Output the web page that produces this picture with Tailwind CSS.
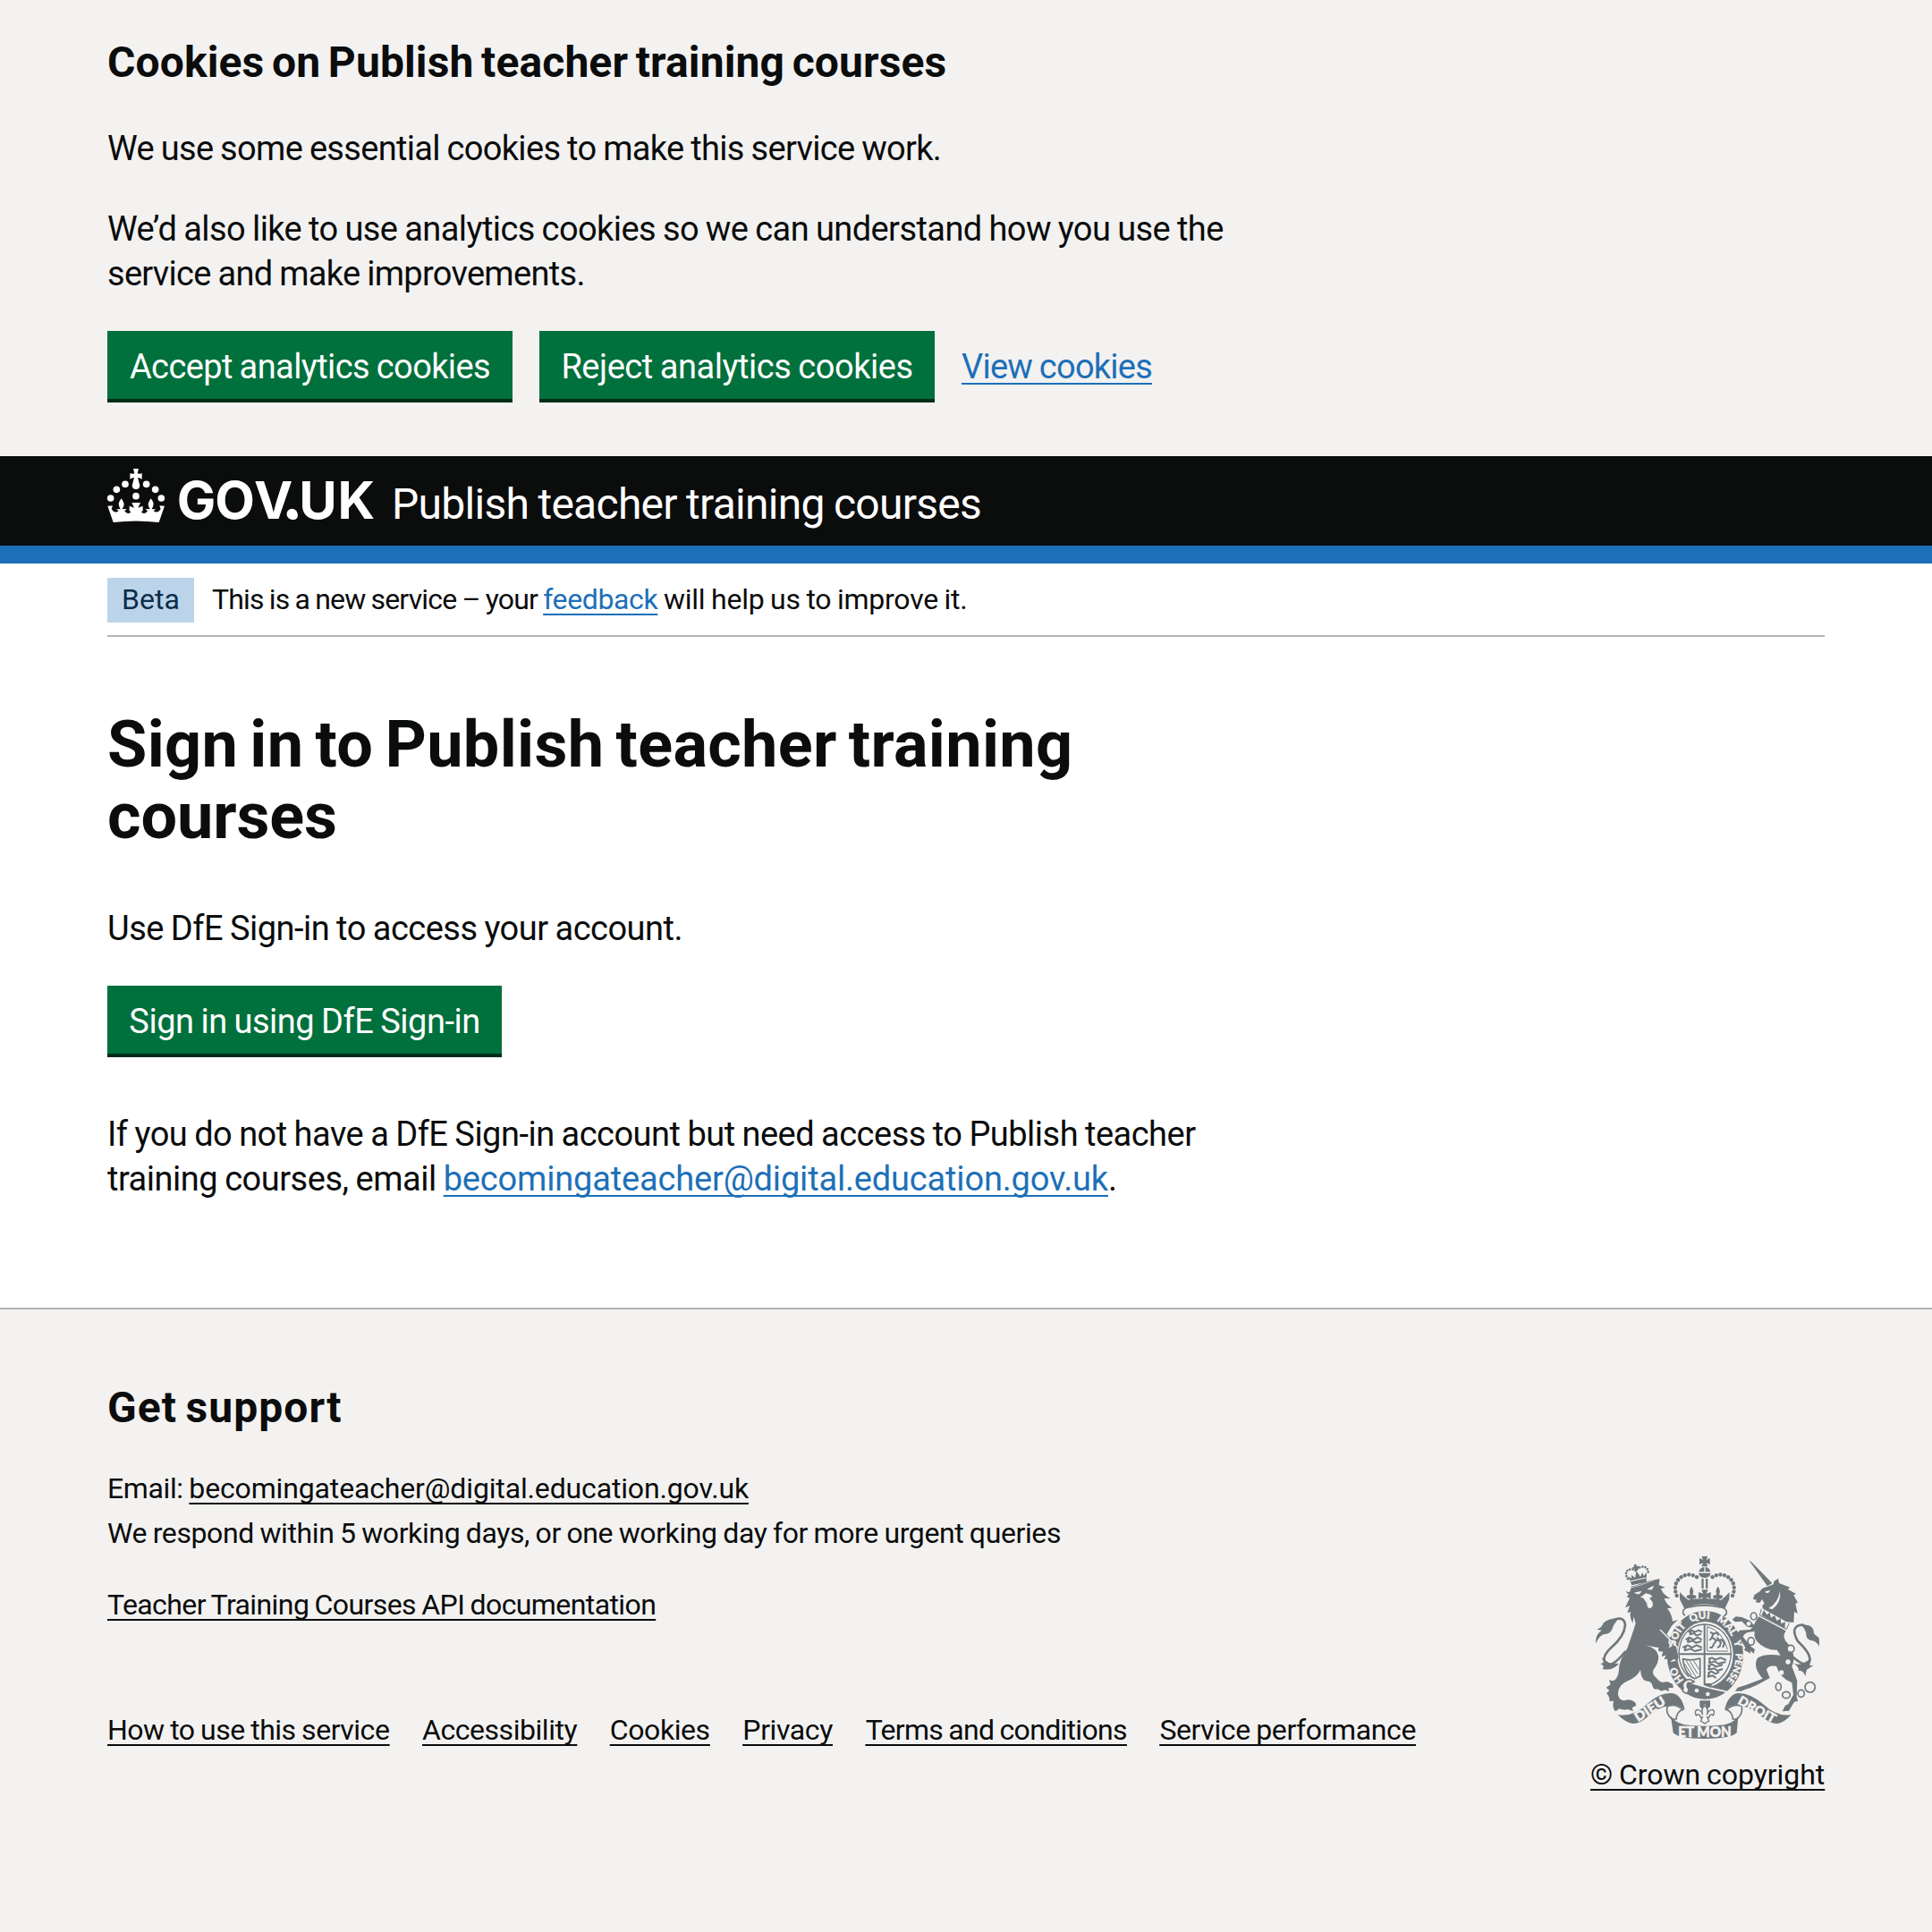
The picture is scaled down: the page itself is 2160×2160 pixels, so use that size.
<!DOCTYPE html>
<html lang="en">
<head>
<meta charset="utf-8">
<title>Sign in to Publish teacher training courses</title>
<script src="https://cdn.jsdelivr.net/npm/@tailwindcss/browser@4"></script>
</head>
<body class="min-h-screen bg-[#f3f2f1] font-['Roboto',sans-serif] text-[38px] leading-[50px] text-[#0b0c0c] [word-spacing:-1px] [text-decoration-skip-ink:none]">

<!-- Cookie banner -->
<section class="h-[510px] px-[120px] pt-10 whitespace-nowrap">
  <h2 class="mb-[41px] text-[48px] leading-[60px] font-bold tracking-[0.11px] [word-spacing:-0.07em]">Cookies on Publish teacher training courses</h2>
  <p class="mb-10 tracking-[-0.68px]">We use some essential cookies to make this service work.</p>
  <p class="mb-[39px]"><span class="tracking-[-0.58px]">We’d also like to use analytics cookies so we can understand how you use the</span><br><span class="tracking-[-0.7px]">service and make improvements.</span></p>
  <div class="flex gap-[30px]">
    <button class="flex h-20 w-[453px] items-center justify-center border-b-4 border-[#002d18] bg-[#00703c] pt-1 leading-[38px] tracking-[-0.6px] text-white [word-spacing:-1px]">Accept analytics cookies</button>
    <button class="flex h-20 w-[442px] items-center justify-center border-b-4 border-[#002d18] bg-[#00703c] pt-1 leading-[38px] tracking-[-0.46px] text-white [word-spacing:-1px]">Reject analytics cookies</button>
    <a class="mt-[15px] tracking-[-0.75px] text-[#1d70b8] underline decoration-2 underline-offset-[5px]">View cookies</a>
  </div>
</section>

<!-- Service header -->
<header class="flex h-[120px] border-b-20 border-[#1d70b8] bg-[#0b0c0c] px-[120px] text-white">
  <svg class="mt-3.5 h-[62px] w-[298px] shrink-0 overflow-visible" viewBox="0 0 298 62" fill="currentColor">
    <g transform="scale(.3333) translate(-30 -42)">
      <circle cx="41" cy="141" r="11.5"/><circle cx="61" cy="112" r="11.5"/><circle cx="90" cy="94" r="11.5"/>
      <circle cx="161" cy="94" r="11.5"/><circle cx="191" cy="112" r="11.5"/><circle cx="211" cy="141" r="11.5"/><circle cx="126" cy="134" r="11.5"/>
      <path d="M117 42H135L131 58Q140 61 146 57V77Q138 73 132 72L139 98Q138 111 126 111Q114 111 113 98L120 72Q112 73 106 77V57Q114 61 121 58Z"/>
      <path d="M31 167L48 166L44 177Q54 194 68 184L60 178L74 178Q68 168 68 158Q72 148 77 142Q83 150 86 160Q86 170 80 178L95 177L88 184Q98 198 110 187L104 184L104 167L120 173L112 156H141L133 173L149 167L149 184L143 187Q155 198 165 184L158 177L173 178Q167 170 167 160Q170 150 176 142Q181 148 185 158Q185 168 179 178L193 178L185 184Q199 194 209 177L205 166L222 167L203 222Q126 213 50 222Z"/>
    </g>
    <text class="font-['Inter',sans-serif] text-[58px] font-bold" x="77.7 120.3 164 198.2 214.2 257.4" y="55.7">GOV.UK</text>
    <circle cx="206.5" cy="50.8" r="6"/>
  </svg>
  <span class="mt-6 ml-5 text-[48px] leading-[60px] tracking-[-0.72px] whitespace-nowrap">Publish teacher training courses</span>
</header>

<main class="h-[832px] bg-white px-[120px] whitespace-nowrap">
  <!-- Phase banner -->
  <div class="flex h-[82px] border-b-2 border-[#b1b4b6] pt-4 text-[32px] leading-10">
    <strong class="h-[50px] w-[97px] bg-[#bbd4ea] px-4 pt-1 font-normal text-[#0c2d4a]">Beta</strong>
    <p class="ml-5 pt-1 whitespace-pre"><span class="tracking-[-0.83px]">This is a new service – your </span><a class="tracking-[-0.37px] text-[#1d70b8] underline decoration-2 underline-offset-[5px]">feedback</a><span class="tracking-[-0.25px]"> will help us to improve it.</span></p>
  </div>

  <h1 class="mt-[81px] mb-15 text-[72px] leading-20 font-bold [word-spacing:-0.07em]"><span class="tracking-[0.32px]">Sign in to Publish teacher training</span><br><span class="tracking-[-0.1px]">courses</span></h1>
  <p class="mb-[39px] tracking-[-0.51px]">Use DfE Sign-in to access your account.</p>
  <button class="mb-[61px] flex h-20 w-[441px] items-center justify-center border-b-4 border-[#002d18] bg-[#00703c] pt-1 leading-[38px] tracking-[-0.5px] text-white [word-spacing:-1px]">Sign in using DfE Sign-in</button>
  <p><span class="tracking-[-0.51px]">If you do not have a DfE Sign-in account but need access to Publish teacher</span><br><span class="tracking-[-0.48px]">training courses, email </span><a class="tracking-[-0.17px] text-[#1d70b8] underline decoration-2 underline-offset-[5px]">becomingateacher@digital.education.gov.uk</a>.</p>
</main>

<footer class="flex justify-between border-t-2 border-[#b1b4b6] px-[120px] pt-20 text-[32px] leading-10 whitespace-nowrap">
  <div>
    <h2 class="mb-10 text-[48px] leading-[60px] font-bold tracking-[1.04px] [word-spacing:-0.07em]">Get support</h2>
    <p class="mb-2.5"><span class="tracking-[-0.37px]">Email: </span><a class="tracking-[-0.15px] underline decoration-2 underline-offset-[5px]">becomingateacher@digital.education.gov.uk</a></p>
    <p class="mb-10 tracking-[-0.39px]">We respond within 5 working days, or one working day for more urgent queries</p>
    <p class="mb-25"><a class="tracking-[-0.6px] underline decoration-2 underline-offset-[5px]">Teacher Training Courses API documentation</a></p>
    <nav class="flex gap-[36.7px] underline decoration-2 underline-offset-[5px]">
      <a class="tracking-[-0.48px]">How to use this service</a>
      <a class="tracking-[-0.46px]">Accessibility</a>
      <a class="tracking-[-0.43px]">Cookies</a>
      <a class="tracking-[-0.4px]">Privacy</a>
      <a class="tracking-[-0.7px]">Terms and conditions</a>
      <a class="tracking-[-0.4px]">Service performance</a>
    </nav>
  </div>
  <div class="w-[262px] pt-48">
    <!-- Royal coat of arms -->
    <svg class="mb-[18px] block h-[210px] w-[262px] font-['Lato',sans-serif] [word-spacing:0]" viewBox="54 48 786 630" fill="#6f777b">
      <!-- lion's crown -->
      <g transform="rotate(-12 213 130)">
        <path d="M182 120L192 130L194 118L204 130L213 108L222 130L232 118L234 130L246 120L238 152H188Z"/>
        <path d="M184 156H244V161H184ZM209 86H217V93H223V101H217V108H209V101H203V93H209Z"/>
        <path d="M186 138H240" stroke="#f3f2f1" stroke-width="3"/>
        <path d="M179 128C168 96 198 92 211 108C226 92 260 96 249 128" fill="none" stroke="#6f777b" stroke-width="8" stroke-linecap="round" stroke-dasharray="0.1 9.5"/>
      </g>
      <!-- lion -->
      <path d="M172 178L186 180L190 167Q240 140 287 136L284 156L305 164L291 169Q298 188 323 202L302 201Q308 220 328 233L312 234Q328 255 330 278L348 273L328 292L310 322L340 355L350 398L345 412L335 404L318 416V402L302 406L308 391L294 396L298 379Q276 382 284 366L262 363L240 358Q275 368 281 390Q288 410 266 440Q258 455 278 470Q290 488 312 480L330 488L333 500L316 502L318 513L304 508Q290 516 280 505Q268 510 262 494Q262 480 240 478Q224 472 222 440Q212 465 175 480Q148 492 147 520Q147 540 165 544L182 541Q206 543 208 560L194 568L198 579L178 573Q165 577 152 571L138 580Q126 568 132 545L118 546Q120 530 108 520L118 510L107 500L122 490L117 475L130 478Q148 470 150 440Q150 410 178 368Q190 335 206 286L200 262L196 284Q184 262 189 246L178 250L186 226L171 232L186 200L176 196L183 188Z"/>
      <path d="M151 266Q130 290 127 305Q120 320 98 322Q82 328 73 353Q68 325 92 308L76 305Q92 300 97 285Q110 268 151 266ZM91 400L101 416L88 420Q105 430 94 437Q125 447 150 420L118 418Z"/>
      <g fill="none" stroke="#6f777b" stroke-width="8"><path d="M138 271Q168 262 171 290Q168 330 122 368Q88 402 107 422Q130 432 172 378"/></g>
      <g fill="#f3f2f1">
        <path d="M200 182L226 176Q222 188 211 187ZM244 170L267 158Q264 174 252 172ZM222 197L232 190L240 184L256 188L262 196L252 200L262 212Q268 226 256 234Q244 236 244 218L232 200Z"/>
      </g>
      <path d="M180 168Q225 158 270 138" fill="none" stroke="#f3f2f1" stroke-width="2"/>

      <!-- imperial crown -->
      <path d="M427 60H448L443 72L455 66V88L443 82L448 94H427L432 82L420 88V66L432 72ZM418 112Q422 97 436 96V112ZM440 96Q454 98 457 112H440ZM417 116H458Q456 131 437 132Q420 131 417 116Z"/>
      <path d="M427 135H434V168H427ZM441 135H448V168H441ZM427 172H449L443 185L458 180V202L443 197L449 212H427L432 197L417 202V180L432 185Z"/>
      <path d="M393 161Q404 174 397 188L409 192Q412 204 398 202L396 212H390L388 202Q376 204 377 192L389 188Q383 174 393 161ZM482 161Q493 174 486 188L498 192Q499 204 487 202L485 212H479L477 202Q464 204 466 192L478 188Q471 174 482 161Z"/>
      <path d="M354 180L368 194L382 206Q437 198 494 206L507 194L521 180L520 204L505 236Q437 205 370 236L354 204Z"/>
      <path d="M344 192C322 142 372 104 412 130M531 192C553 142 503 104 463 130" fill="none" stroke="#6f777b" stroke-width="13" stroke-linecap="round" stroke-dasharray="0.1 13.8"/>
      <path d="M372 258Q362 254 366 240Q374 232 384 231Q437 218 490 231Q504 232 510 242Q514 254 502 260" fill="none" stroke="#6f777b" stroke-width="5"/>

      <!-- garter -->
      <ellipse cx="439" cy="391" rx="128" ry="148"/>
      <ellipse cx="439" cy="389" rx="94" ry="110" fill="#f3f2f1"/>
      <path d="M330 338Q304 376 324 414L352 408L345 366Z" fill="#f3f2f1"/>
      <path d="M286 305L340 355L350 398L345 414L335 404L318 416V402L302 406L308 391L294 396L298 379L330 360Z"/>
      <path d="M288 306L347 366" stroke="#f3f2f1" stroke-width="4"/>
      <path id="motto" d="M439 510A103 120 0 0 1 439 270A103 120 0 0 1 439 510" transform="translate(0 -1)" fill="none"/>
      <g class="text-[34px] font-black" fill="#f3f2f1" stroke="#f3f2f1" stroke-width="1.2">
        <text><textPath href="#motto" startOffset="11.5%">HO</textPath></text>
        <text><textPath href="#motto" startOffset="29%">SOIT</textPath></text>
        <text><textPath href="#motto" startOffset="43%">QUI</textPath></text>
        <text><textPath href="#motto" startOffset="55.5%">MAL</textPath></text>
        <text><textPath href="#motto" startOffset="68.5%">Y</textPath></text>
        <text class="text-[32px]"><textPath href="#motto" startOffset="74.5%">PENSE</textPath></text>
      </g>
      <g fill="none" stroke="#6f777b" stroke-width="4">
        <path d="M437 288V486M351 388H526" stroke-width="6"/>
        <path d="M437 288C380 290 352 335 351 388C352 420 364 446 384 464M437 288C494 290 526 335 526 388C524 438 494 474 462 488"/>
        <path d="M446 296V378H516M446 296Q498 310 514 372" stroke-width="3"/>
      </g>
      <!-- quarterings -->
      <g fill="none" stroke="#6f777b" stroke-width="6" stroke-linejoin="bevel">
        <path d="M382 314L394 308L404 314L418 308L428 314M392 310L388 322L402 318L410 326L426 320M374 340L386 332L400 340L414 332L428 340M386 334L380 348L398 343L408 350L426 345M364 366L380 358L396 366L410 358L428 366M376 360L370 376L390 370L404 378L428 372"/>
        <path d="M450 404L462 400L474 407L490 400L510 408M456 402L452 418L470 412L484 420L508 414M448 428L462 422L476 430L498 424M456 424L450 440L470 436L480 444L498 438M448 452L460 446L474 454L486 448M454 450L448 464L464 460L476 468"/>
        <path d="M456 314L466 320L462 332L476 342L470 352L462 366L454 366M478 332L492 350L488 362L480 366M466 320L480 316L484 326M476 342L496 340L504 352L498 366M462 332L454 342" stroke-width="6"/>
        <path d="M364 404Q392 412 422 402V462L404 470Q372 460 364 404Z" stroke-width="5"/>
        <path d="M376 410L408 464M388 412L414 454M400 410L420 440M370 420L394 458" stroke-width="3"/>
      </g>
      <!-- strap and buckle -->
      <path d="M368 488L388 482Q440 496 508 512Q480 536 436 538Q400 534 370 514Z"/>
      <path d="M392 484Q445 500 512 514" stroke="#f3f2f1" stroke-width="5" fill="none"/>
      <path d="M434 486H464L458 500L434 492Z"/>
      <circle cx="411" cy="510" r="7" fill="#f3f2f1"/><circle cx="448" cy="522" r="7" fill="#f3f2f1"/>
      <path d="M370 480Q384 466 402 480Q392 488 382 484Q374 496 384 506L380 520Q358 516 366 502Q360 490 370 480Z" fill="#f3f2f1" stroke="#6f777b" stroke-width="5"/>

      <!-- pendant fleur-de-lis -->
      <path d="M421 544H456V563L447 572L438 555L428 572L421 563Z"/>
      <path d="M438 560Q452 574 445 592Q450 574 464 574Q474 580 466 594L462 590Q454 590 452 600H446L452 612L438 621L424 612L430 600H424Q422 590 414 590L409 594Q402 580 412 574Q426 574 431 592Q424 574 438 560Z" fill="#f3f2f1" stroke="#6f777b" stroke-width="4"/>

      <!-- unicorn -->
      <path d="M587 75L593 77L664 150L648 160Z"/>
      <path d="M645 163L668 154L670 144L684 134L687 150L724 164L716 170L744 186L736 190L750 216L742 218L749 252L738 246L736 282L712 280L634 236Q626 226 638 218L630 204L622 216L608 214L612 206L600 204L604 190L624 176Q632 164 645 163Z"/>
      <path d="M640 178L656 174Q656 184 644 183ZM690 176Q696 214 664 238L652 234Q684 216 690 176Z" fill="#f3f2f1"/>
      <path d="M628 236L720 288L712 304L622 258Z" fill="#f3f2f1"/>
      <path d="M628 236L622 258L712 304L721 284" fill="none" stroke="#6f777b" stroke-width="3"/>
      <path d="M628 258L636 240L646 256L656 248L660 266L672 258L680 276L692 268L694 286L708 280L706 302Z"/>
      <path d="M618 262L710 310Q694 332 716 352Q748 392 730 428L748 478L746 530L750 546L738 548L720 578L698 580L708 560L718 556L735 524L730 484Q690 468 678 428Q650 424 645 440L656 468Q600 500 578 505L560 512H540L548 500L575 492L632 470Q596 430 616 400Q640 385 692 392L680 374Q640 375 612 344Q600 325 606 312Q570 312 566 330L592 362L606 372L602 386L590 376L592 386L570 374L574 366L552 330L545 318L556 308L590 306L600 298Q590 300 578 294L562 278L540 280L530 272L542 262L562 264L590 276L602 290Z"/>
      <g fill="#f3f2f1" stroke="#6f777b" stroke-width="5">
        <ellipse cx="602" cy="261" rx="10" ry="12"/><ellipse cx="593" cy="345" rx="11" ry="13"/><circle cx="726" cy="370" r="12"/>
        <ellipse cx="685" cy="497" rx="9" ry="13"/><ellipse cx="711" cy="525" rx="13" ry="11"/><ellipse cx="761" cy="520" rx="11" ry="12"/><circle cx="791" cy="499" r="17"/>
      </g>
      <g fill="#f3f2f1"><circle cx="585" cy="286" r="7"/><circle cx="717" cy="414" r="8"/><circle cx="695" cy="450" r="8"/></g>
      <path d="M734 398Q780 438 790 410Q794 386 750 345Q724 300 756 291Q764 288 772 292" fill="none" stroke="#6f777b" stroke-width="8"/>
      <path d="M762 290Q796 286 803 308Q800 322 820 332Q824 345 821 362Q812 342 794 342Q776 336 778 318Q774 302 762 290ZM734 418Q756 432 794 402L790 426L802 426L780 440Q776 452 776 462Q766 440 752 444Q756 432 734 418Z"/>

      <!-- ribbons -->
      <path d="M146 591Q200 600 244 556Q284 518 324 519Q360 520 371 576Q340 548 316 562Q284 566 250 594Q222 622 196 621Q170 616 146 591Z"/>
      <path d="M728 591Q680 600 634 556Q590 518 550 519Q516 522 504 576Q534 548 560 562Q590 566 628 596Q656 622 682 621Q706 616 728 591Z"/>
      <g fill="#f3f2f1" stroke="#6f777b" stroke-width="5">
        <path d="M316 562Q340 552 364 574Q344 580 342 606L328 606Q306 588 312 564Z"/>
        <path d="M560 562Q536 552 510 574Q530 580 532 606L546 606Q566 588 562 564Z"/>
      </g>
      <path d="M324 596Q345 626 392 627Q437 632 482 627Q530 626 550 596L545 652Q524 672 437 672Q350 672 332 652Z"/>
      <g class="font-black" fill="#f3f2f1" stroke="#f3f2f1" stroke-width="1.5">
        <text class="text-[48px]" x="349" y="665" textLength="178" lengthAdjust="spacingAndGlyphs">ET MON</text>
        <text class="text-[43px]" transform="translate(214 616) rotate(-33)" textLength="114" lengthAdjust="spacingAndGlyphs">DIEU</text>
        <text class="text-[42px]" transform="translate(546 553) rotate(29)" textLength="138" lengthAdjust="spacingAndGlyphs">DROIT</text>
      </g>
    </svg>
    <a class="tracking-[-0.04px] underline decoration-2 underline-offset-[5px]">© Crown copyright</a>
  </div>
</footer>
</body>
</html>
